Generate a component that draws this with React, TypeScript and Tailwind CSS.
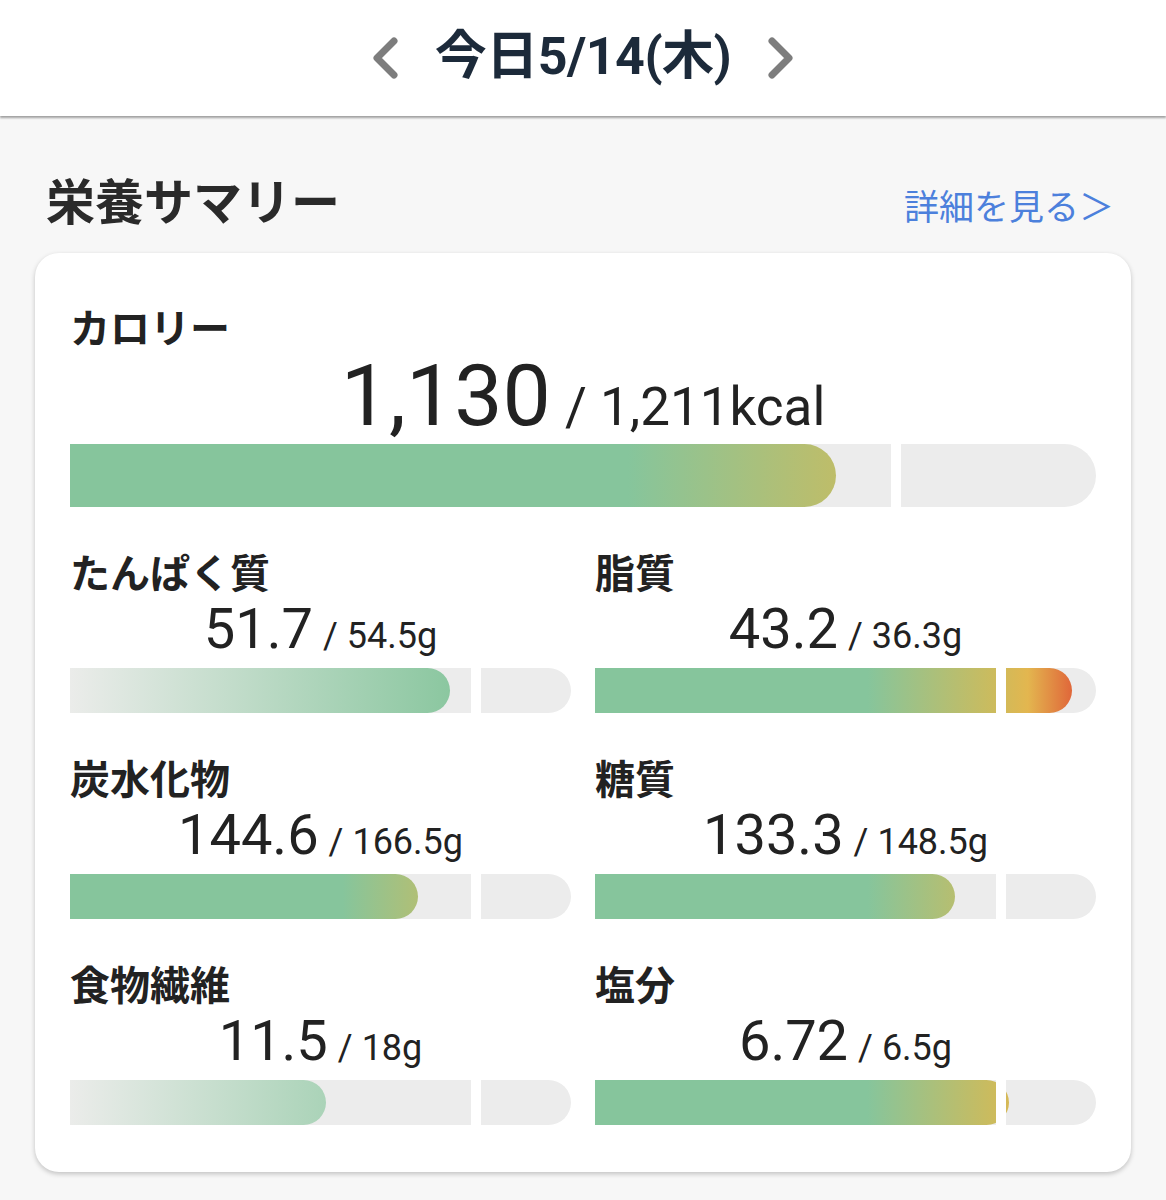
import type { CSSProperties } from 'react';

type Kind = 'limit' | 'goal';

interface Nutrient {
  label: string;
  value: string;
  target: string;
  unit: string;
  ratio: number;
  kind: Kind;
}

const nutrients: Nutrient[] = [
  { label: 'たんぱく質', value: '51.7', target: '54.5', unit: 'g', ratio: 51.7 / 54.5, kind: 'goal' },
  { label: '脂質', value: '43.2', target: '36.3', unit: 'g', ratio: 43.2 / 36.3, kind: 'limit' },
  { label: '炭水化物', value: '144.6', target: '166.5', unit: 'g', ratio: 144.6 / 166.5, kind: 'limit' },
  { label: '糖質', value: '133.3', target: '148.5', unit: 'g', ratio: 133.3 / 148.5, kind: 'limit' },
  { label: '食物繊維', value: '11.5', target: '18', unit: 'g', ratio: 11.5 / 18, kind: 'goal' },
  { label: '塩分', value: '6.72', target: '6.5', unit: 'g', ratio: 6.72 / 6.5, kind: 'limit' },
];

// gradient stops are given in "target" units, then mapped onto the fill's own width
function fillStyle(ratio: number, kind: Kind): CSSProperties {
  const p = (t: number) => `${((t / ratio) * 100).toFixed(2)}%`;
  const background =
    kind === 'goal'
      ? `linear-gradient(to right, #ebecea 0%, #86c59c ${p(1)})`
      : `linear-gradient(to right, #86c59c 0%, #86c59c ${p(0.68)}, #cdbb5c ${p(1)}, #e3b64f ${p(1.08)}, #e0673a ${p(1.19)})`;
  return { width: `${ratio * 80}%`, background };
}

function Bar({ ratio, kind, height }: { ratio: number; kind: Kind; height: string }) {
  return (
    <div className={`relative w-full ${height}`}>
      <div className="flex h-full w-full">
        <div className="h-full w-[80%] bg-[#ececec]" />
        <div className="h-full w-[10px]" />
        <div className="h-full flex-1 rounded-r-full bg-[#ececec]" />
      </div>
      <div className="absolute left-0 top-0 h-full rounded-r-full" style={fillStyle(ratio, kind)} />
      {/* white gap between the target segment and the overflow segment */}
      <div className="absolute left-[80%] top-0 h-full w-[10px] bg-white" />
    </div>
  );
}

function Chevron({ dir }: { dir: 'left' | 'right' }) {
  return (
    <svg width="34" height="48" viewBox="0 0 34 48" fill="none" className="shrink-0">
      <path
        d={dir === 'left' ? 'M25 7 L8 24 L25 41' : 'M9 7 L26 24 L9 41'}
        stroke="#7d7d7d"
        strokeWidth="7"
        strokeLinecap="round"
        strokeLinejoin="round"
      />
    </svg>
  );
}

export default function App() {
  return (
    <div className="min-h-[1200px] w-full bg-[#f7f7f7] font-['Roboto','Noto_Sans_CJK_JP',sans-serif] text-[#222]">
      {/* Date header */}
      <header className="flex h-[116px] items-center justify-center gap-[32px] bg-white shadow-[0_2px_2px_rgba(0,0,0,0.35)]">
        <Chevron dir="left" />
        <h1 className="pb-[2px] text-[52px] font-bold leading-none tracking-[-0.5px] text-[#1c2a3a]">今日5/14(木)</h1>
        <Chevron dir="right" />
      </header>

      {/* Section title */}
      <div className="flex items-end justify-between pl-[46px] pr-[52px] pt-[54px]">
        <h2 className="font-['Noto_Sans_CJK_JP',sans-serif] text-[49px] font-bold leading-[58px] text-[#2a2a2a]">
          栄養サマリー
        </h2>
        <a className="font-['Noto_Sans_CJK_JP',sans-serif] text-[35px] leading-[46px] text-[#4c80dc]">
          詳細を見る＞
        </a>
      </div>

      {/* Summary card */}
      <div className="mx-[35px] mt-[25px] rounded-[24px] bg-white px-[35px] pb-[47px] pt-[50px] shadow-[0_2px_5px_rgba(0,0,0,0.22)]">
        <div className="font-['Noto_Sans_CJK_JP',sans-serif] text-[40px] font-bold leading-[46px]">カロリー</div>
        <div className="mt-[4px] flex items-baseline justify-center leading-none">
          <span className="text-[86px] leading-none">1,130</span>
          <span className="ml-[14px] text-[53px] leading-none">/ 1,211kcal</span>
        </div>
        <div className="mt-[5px]">
          <Bar ratio={1130 / 1211} kind="limit" height="h-[63px]" />
        </div>

        <div className="mt-[41px] grid grid-cols-2 gap-x-[24px] gap-y-[41px]">
          {nutrients.map((n) => (
            <div key={n.label}>
              <div className="font-['Noto_Sans_CJK_JP',sans-serif] text-[40px] font-bold leading-[46px]">{n.label}</div>
              <div className="mt-[7px] flex items-baseline justify-center leading-none">
                <span className="text-[56px] leading-none">{n.value}</span>
                <span className="ml-[10px] text-[36px] leading-none">
                  / {n.target}
                  {n.unit}
                </span>
              </div>
              <div className="mt-[11px]">
                <Bar ratio={n.ratio} kind={n.kind} height="h-[45px]" />
              </div>
            </div>
          ))}
        </div>
      </div>
    </div>
  );
}
